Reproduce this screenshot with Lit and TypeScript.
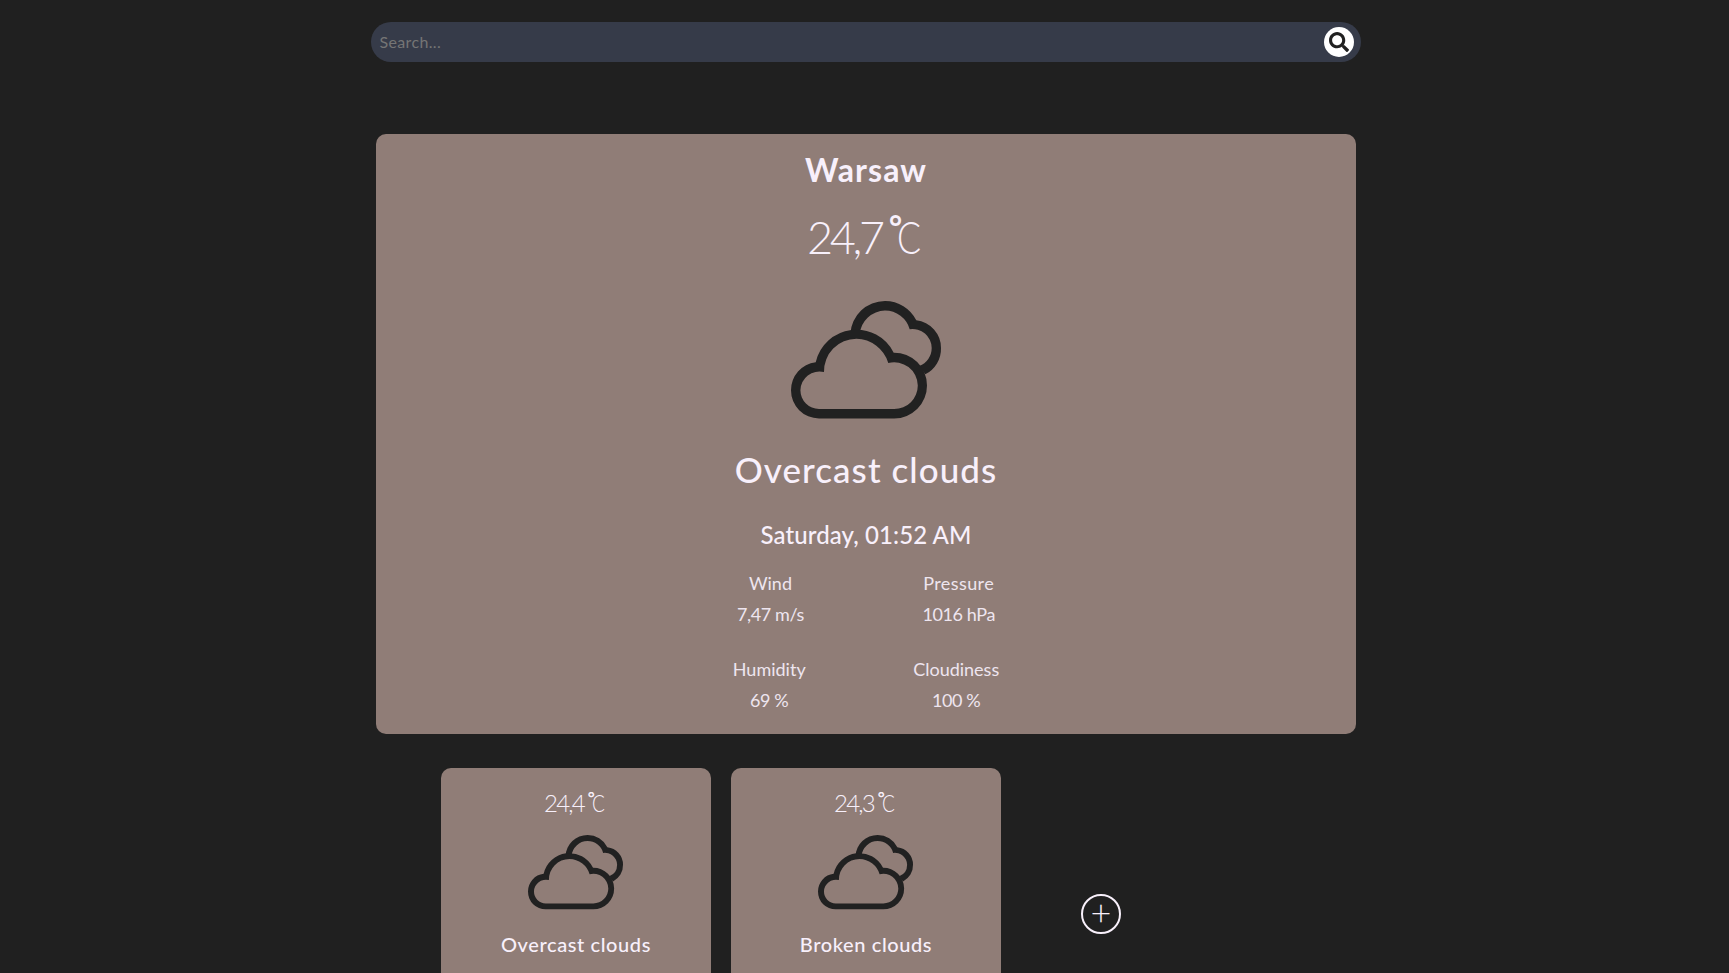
import { LitElement, html, css } from "lit";
import { customElement, property } from "lit/decorators.js";

@customElement("cloud-icon")
class CloudIcon extends LitElement {
  static styles = css`
    :host { display: block; }
    svg { display: block; width: 100%; height: 100%; fill: #212121; fill-rule: evenodd; overflow: visible; }
  `;
  render() {
    return html`<svg viewBox="0 0 150 117.4">
      <path d="M59.3 33A34.8 34.8 0 0 1 94 0A34.8 34.8 0 0 1 125.3 19.3A27.6 27.6 0 0 1 150 47A28.6 28.6 0 0 1 134.3 73.3L128.3 65A19.2 19.2 0 0 0 140.7 47A19.2 19.2 0 0 0 118.7 28.2A25.7 25.7 0 0 0 94 9.6A25.7 25.7 0 0 0 68.7 33Z" />
      <path d="M28 117.4A28 28 0 0 1 0 89.3A28 28 0 0 1 24.7 61.3A41.7 41.7 0 0 1 102.7 51.7A32.8 32.8 0 0 1 136 84.5A32.8 32.8 0 0 1 103.2 117.4ZM28 108.1A19 19 0 0 1 9.4 89.3A19 19 0 0 1 33 71.1A32.4 32.4 0 0 1 65.5 37.8A34 34 0 0 1 97.3 62A23.6 23.6 0 0 1 126.8 84.5A23.6 23.6 0 0 1 103.2 108.1Z" />
    </svg>`;
  }
}

@customElement("temp-value")
class TempValue extends LitElement {
  @property() value = "";
  static styles = css`
    :host { display: flex; justify-content: center; font-family: "Lato Light", Lato, sans-serif; font-weight: 300; }
    .num { letter-spacing: -0.075em; }
    .ring { font-family: Lato, sans-serif; font-weight: 700; font-size: 0.7em; width: 0.27em; margin-left: 0.23em; transform: translateY(-0.32em); }
    .c { display: inline-block; transform: scaleX(0.79); transform-origin: left; width: 0.57em; }
  `;
  render() {
    return html`<span class="num">${this.value}</span><span class="ring">°</span><span class="c">C</span>`;
  }
}

@customElement("mini-card")
class MiniCard extends LitElement {
  @property() temp = "";
  @property() desc = "";
  static styles = css`
    :host { display: block; box-sizing: border-box; width: 270px; height: 300px; padding-top: 20px; border-radius: 10px; background: #907d77; }
    temp-value { font-size: 24px; line-height: 30px; margin-right: 2px; }
    cloud-icon { width: 95px; height: 74.4px; margin: 17.3px 0 0 87px; }
    .desc { margin-top: 19.7px; font-family: "Lato Medium", Lato, sans-serif; font-size: 20px; line-height: 30px; text-align: center; letter-spacing: 0.6px; }
  `;
  render() {
    return html`<temp-value .value=${this.temp}></temp-value>
      <cloud-icon></cloud-icon>
      <div class="desc">${this.desc}</div>`;
  }
}

@customElement("app-root")
class AppRoot extends LitElement {
  static styles = css`
    :host { display: block; height: 973px; overflow: hidden; background: #202020; color: #f8f0fb; font-family: Lato, sans-serif; }
    .page { width: 990px; margin-left: 371px; padding-top: 22px; display: flex; flex-direction: column; align-items: center; }
    .search { box-sizing: border-box; width: 990px; height: 40px; border-radius: 20px; background: #363b49; display: flex; align-items: center; justify-content: space-between; padding: 0 7px 0 8.5px; }
    .hint { font-size: 16px; letter-spacing: 0.35px; color: #757575; padding-bottom: 2px; }
    .go { width: 30px; height: 30px; border-radius: 50%; background: #fff; display: flex; align-items: center; justify-content: center; }
    .go svg { width: 20px; height: 20px; fill: #212121; }
    .main { box-sizing: border-box; width: 980px; height: 599.5px; margin-top: 72px; padding-top: 16px; border-radius: 10px; background: #907d77; text-align: center; }
    .city { font-size: 32px; line-height: 40px; font-weight: 700; letter-spacing: 1.1px; }
    .main temp-value { margin-top: 17px; font-size: 45px; line-height: 60px; margin-right: 2px; }
    .main cloud-icon { width: 150px; height: 117.4px; margin: 34.3px auto 0; }
    .desc { margin-top: 28.2px; font-size: 35px; line-height: 44px; letter-spacing: 1.05px; font-family: "Lato Medium", Lato, sans-serif; }
    .date { margin-top: 29px; font-size: 24px; line-height: 30px; letter-spacing: 0.1px; font-family: "Lato Medium", Lato, sans-serif; }
    .stats { display: flex; justify-content: center; font-size: 18px; line-height: 31px; margin-top: 18px; gap: 118.5px; color: #eee5ef; }
    .lower { margin-top: 24px; gap: 107.5px; }
    .tight { letter-spacing: -0.4px; }
    .wide { letter-spacing: 0.4px; }
    .row { width: 980px; margin-top: 34.5px; display: flex; gap: 20px; padding-left: 130px; }
    .add { box-sizing: border-box; width: 40px; height: 40px; margin: 126px 0 0 60px; border: 2px solid #f8f0fb; border-radius: 50%; display: flex; align-items: center; justify-content: center; font: 300 36px/30px "Lato Light", Lato, sans-serif; }
    .add span { margin-top: -5px; }
  `;
  render() {
    return html`<div class="page">
      <div class="search">
        <span class="hint">Search...</span>
        <span class="go"><svg viewBox="0 0 512 512"><path d="M505 442.7L405.3 343c-4.5-4.5-10.6-7-17-7H372c27.6-35.3 44-79.7 44-128C416 93.1 322.9 0 208 0S0 93.1 0 208s93.1 208 208 208c48.3 0 92.7-16.4 128-44v16.3c0 6.4 2.5 12.5 7 17l99.7 99.7c9.4 9.4 24.6 9.4 33.9 0l28.3-28.3c9.4-9.4 9.4-24.6.1-34zM208 336c-70.7 0-128-57.2-128-128 0-70.7 57.2-128 128-128 70.7 0 128 57.2 128 128 0 70.7-57.2 128-128 128z" /></svg></span>
      </div>
      <div class="main">
        <div class="city">Warsaw</div>
        <temp-value value="24,7"></temp-value>
        <cloud-icon></cloud-icon>
        <div class="desc">Overcast clouds</div>
        <div class="date">Saturday, 01:52 AM</div>
        <div class="stats">
          <div><div>Wind</div><div class="tight">7,47 m/s</div></div>
          <div><div class="wide">Pressure</div><div class="tight">1016 hPa</div></div>
        </div>
        <div class="stats lower">
          <div><div>Humidity</div><div class="tight">69 %</div></div>
          <div><div>Cloudiness</div><div class="tight">100 %</div></div>
        </div>
      </div>
      <div class="row">
        <mini-card temp="24,4" desc="Overcast clouds"></mini-card>
        <mini-card temp="24,3" desc="Broken clouds"></mini-card>
        <div class="add"><span>+</span></div>
      </div>
    </div>`;
  }
}
